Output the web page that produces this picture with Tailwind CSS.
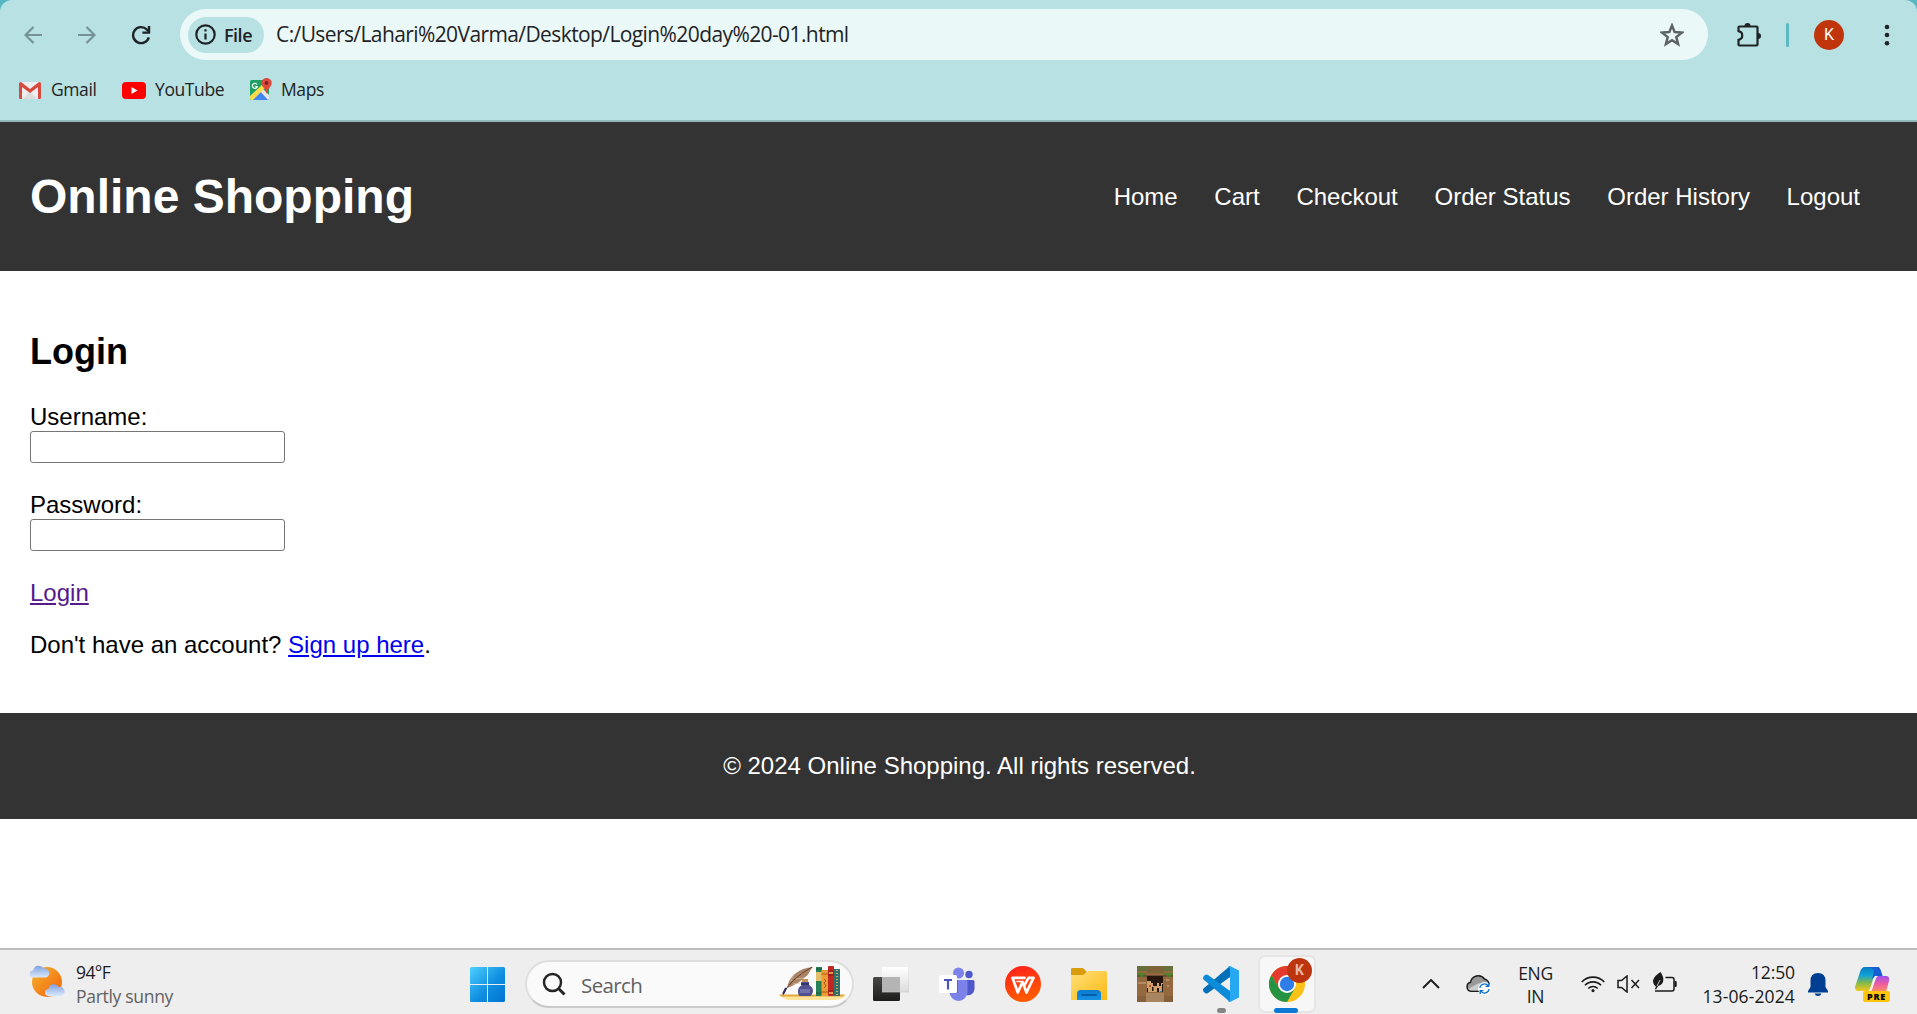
<!DOCTYPE html>
<html lang="en">
<head>
<meta charset="utf-8">
<title>Online Shopping</title>
<script src="https://cdn.jsdelivr.net/npm/@tailwindcss/browser@4"></script>
</head>
<body class="flex h-[1014px] w-[1917px] flex-col overflow-hidden bg-white font-['Open_Sans',sans-serif]">

<!-- Browser toolbar -->
<div class="h-[122px] shrink-0 bg-[#58b8c1]">
<div class="h-[122px] rounded-t-[12px] border-b-2 border-[#92b8ba] bg-[#b8e1e4] pt-[9px] text-[#1f2325]">
  <div class="flex h-[51px] items-center">
    <svg class="ml-[24px] h-[18px] w-[18px]" viewBox="0 0 18 18" fill="none" stroke="#759294" stroke-width="2.2"><path d="M18 9H2M9.500 1L1.500 9l8 8"/></svg>
    <svg class="ml-[36px] h-[18px] w-[18px]" viewBox="0 0 18 18" fill="none" stroke="#759294" stroke-width="2.2"><path d="M0 9h16M8.500 1l8 8-8 8"/></svg>
    <svg class="ml-[35px] h-[20px] w-[20px]" viewBox="0 0 20 20" fill="none" stroke="#1f2325" stroke-width="2.4"><path d="M17.800 12.300A8 8 0 1 1 15.800 4.500L18 6.700"/><path d="M18 1v6.600h-6.600"/></svg>
    <div class="ml-[29px] flex h-[51px] w-[1528px] items-center rounded-full bg-[#ebf8f8] pl-[8px]">
      <div class="flex h-[36px] w-[76px] items-center rounded-full bg-[#b8e1e4] pl-[7px]">
        <svg class="h-[21px] w-[21px]" viewBox="0 0 21 21" fill="none" stroke="#1f2325" stroke-width="2.200"><circle cx="10.500" cy="10.500" r="9.200"/><path d="M10.500 9.500v6M10.500 5.200v2.300"/></svg>
        <span class="ml-[8px] text-[18px] font-semibold leading-6 tracking-[-0.5px]">File</span>
      </div>
      <span class="-mt-[1px] ml-[12px] w-[600px] whitespace-nowrap text-[21px] leading-7 tracking-[-0.6px]">C:/Users/Lahari%20Varma/Desktop/Login%20day%20-01.html</span>
      <svg class="ml-[784px] h-[24px] w-[24px]" viewBox="0 0 24 24" fill="none" stroke="#5d6365" stroke-width="2.500"><path d="M12 2.500l2.700 6.600 7.100.5-5.500 4.500 1.800 7-6.100-3.800-6.100 3.800 1.800-7-5.500-4.500 7.100-.5z"/></svg>
    </div>
    <svg class="ml-[28px] h-[26px] w-[26px]" viewBox="0 0 26 26"><path d="M3.500 4.500h17a1 1 0 0 1 1 1v17a1 1 0 0 1-1 1h-17a1 1 0 0 1-1-1v-4.700c5-1 5-7.600 0-8.600V5.500a1 1 0 0 1 1-1z" fill="none" stroke="#1f2325" stroke-width="2.200"/><path d="M8.500 4a3 3 0 0 1 6 0zM22 11a3 3 0 0 1 0 6z" fill="#1f2325"/></svg>
    <div class="ml-[24px] h-[24px] w-[3px] rounded bg-[#5cb9c2]"></div>
    <div class="ml-[25px] flex h-[30px] w-[30px] items-center justify-center rounded-full bg-[#c1350d] font-['Roboto'] text-[16px] text-white">K</div>
    <svg class="ml-[40px] h-[22px] w-[6px]" viewBox="0 0 6 22" fill="#1f2325"><circle cx="3" cy="3" r="2.300"/><circle cx="3" cy="11" r="2.300"/><circle cx="3" cy="19.300" r="2.300"/></svg>
  </div>
  <div class="flex h-[60px] items-center text-[17.5px] tracking-[-0.4px]">
    <svg class="ml-[19px] h-[17px] w-[22px]" viewBox="0 0 22 17"><path d="M1 0h20v17H1z" fill="#eee"/><path d="M4 17l7-8 7 8z" fill="#ddd"/><path d="M0 1.500Q0 0 2 0l9 7 9-7q2 0 2 1.500V15.500Q22 17 20.500 17H19V5l-8 6-8-6v12H1.500Q0 17 0 15.500z" fill="#d9493c"/></svg>
    <span class="-mt-[1px] ml-[10px] w-[46px]">Gmail</span>
    <svg class="ml-[25px] h-[17px] w-[24px]" viewBox="0 0 24 17"><rect width="24" height="17" rx="4" fill="#f00"/><path d="M9.500 5v7l6-3.500z" fill="#fff"/></svg>
    <span class="-mt-[1px] ml-[9px] w-[70px]">YouTube</span>
    <svg class="-mt-[2px] ml-[25px] h-[22px] w-[22px]" viewBox="0 0 22 22"><rect y="2" width="19" height="20" rx="1.500" fill="#1fa163"/><path d="M2 22l8.500-8.500L19 22z" fill="#4285f4"/><path d="M9 12l3-2 7 7v4l-1 1z" fill="#e8e8e8"/><path d="M0 18L12 7l3 3L3 22H1.500Q0 22 0 20z" fill="#fddc4b"/><path d="M7 6.500a2.500 2.500 0 1 0 .3 2H5" fill="none" stroke="#fff" stroke-width="1.200"/><path d="M16.500 0c3.300 0 5.200 2.400 5.200 5 0 4-4 5-5 11-1-6-5.200-7-5.200-11 0-2.600 1.900-5 5-5z" fill="#dc4b3e"/><circle cx="16.500" cy="5" r="1.900" fill="#7d241e"/></svg>
    <span class="-mt-[1px] ml-[9px]">Maps</span>
  </div>
</div>
</div>

<!-- Page -->
<div class="flex h-[826px] shrink-0 flex-col bg-white font-['Liberation_Sans',Arial,sans-serif] text-[24px] leading-[27px] text-black">
  <header class="flex h-[149px] shrink-0 items-center justify-between bg-[#333] px-[30px] text-white">
    <h1 class="text-[48px] font-bold leading-[54px]">Online Shopping</h1>
    <nav class="mr-[27px] flex gap-[36.700px]">
      <a>Home</a><a>Cart</a><a>Checkout</a><a>Order Status</a><a>Order History</a><a>Logout</a>
    </nav>
  </header>
  <main class="flex h-[442px] shrink-0 flex-col items-start px-[30px] pt-[60px]">
    <h2 class="mb-[31px] text-[36px] font-bold leading-[41px]">Login</h2>
    <label class="h-[28px]">Username:</label>
    <input class="mb-[28px] h-[32px] w-[255px] rounded-[3px] border border-[#767676] bg-white">
    <label class="h-[28px]">Password:</label>
    <input type="password" class="mb-[28px] h-[32px] w-[255px] rounded-[3px] border border-[#767676] bg-white">
    <a class="mb-[25px] text-[#551a8b] underline">Login</a>
    <p>Don't have an account? <a class="text-[#0000ee] underline">Sign up here</a>.</p>
  </main>
  <footer class="flex h-[106px] shrink-0 items-center justify-center bg-[#333] pb-[2px] pl-[2px] text-white">© 2024 Online Shopping. All rights reserved.</footer>
</div>

<!-- Taskbar -->
<div class="flex h-[66px] shrink-0 items-center border-t-2 border-[#bdbdbd] bg-[#eee] pt-[4px] text-[#1b1b1b]">
  <svg class="-mt-[7px] ml-[29px] h-[34px] w-[36px]" viewBox="0 0 36 34">
    <defs><linearGradient id="sun" x2="1" y2="1"><stop stop-color="#f5b52c"/><stop offset="1" stop-color="#f2600c"/></linearGradient><linearGradient id="cl" x2="0" y2="1"><stop stop-color="#7fa0e0"/><stop offset="1" stop-color="#dbe9fb"/></linearGradient></defs>
    <circle cx="18" cy="18" r="15" fill="url(#sun)"/>
    <path id="cloud" d="M3.500 13.500a3.600 3.600 0 0 1 .8-7.100A5.500 5.500 0 0 1 14.500 4.500a4.600 4.600 0 0 1 2.500 9z" fill="url(#cl)"/>
    <use href="#cloud" x="15.200" y="18.500"/>
  </svg>
  <div class="-mt-[1px] ml-[11px] w-[110px] text-[17.5px] leading-[24px] tracking-[-0.3px]"><div class="tracking-[-0.6px]">94°F</div><div class="whitespace-nowrap text-[#616161]">Partly sunny</div></div>

  <svg class="ml-[284px] h-[35px] w-[35px]" viewBox="0 0 35 35">
    <defs><linearGradient id="win" x2="1" y2="1"><stop stop-color="#4fd0ff"/><stop offset=".55" stop-color="#0f8fe0"/><stop offset="1" stop-color="#0273d3"/></linearGradient></defs>
    <path d="M1.500 0H17v17H0V1.500Q0 0 1.500 0zM18 0h15.500Q35 0 35 1.500V17H18zM0 18h17v17H1.500Q0 35 0 33.500zM18 18h17v15.500q0 1.500-1.500 1.500H18z" fill="url(#win)"/>
  </svg>

  <div class="ml-[20px] flex h-[48px] w-[329px] items-center rounded-full border-2 border-[#dedede] border-b-[#c9c9c9] bg-[#fafafa] pl-[15px]">
    <svg class="h-[24px] w-[24px]" viewBox="0 0 24 24" fill="none" stroke="#252525" stroke-width="2.500"><circle cx="10.500" cy="10.500" r="8.500"/><path d="M16.500 16.500l6 6" stroke-width="3"/></svg>
    <span class="ml-[15px] mt-[2px] w-[198px] text-[20.5px] leading-6 tracking-[-0.6px] text-[#616161]">Search</span>
    <svg class="h-[36px] w-[67px]" viewBox="0 0 67 36">
      <path d="M0 29h67q-3 4-10 5H9q-5-1-9-5z" fill="#ffe39a"/><path d="M0 28.500h66l-2 2H2z" fill="#dfa83c"/>
      <path d="M8 22C10 10 20 2 34 1c-4 4-3 7-9 11-4 4-11 8-17 10z" fill="#a98363"/><path d="M4 29Q10 14 33 1" fill="none" stroke="#5d4334" stroke-width="1"/><path d="M4 28l3-6" stroke="#312e68" stroke-width="2"/><path d="M14 18l7-1M17 13l8-1M12 15l3-7" stroke="#dac2a3" stroke-width=".7"/>
      <path d="M23 13h6v4h-6z" fill="#c69255"/><path d="M22 16h8v3q4 2 4 6-1 5-3 5H21q-2 0-2-5 0-4 4-6z" fill="#51518f"/><path d="M21 23h10v4H21z" fill="#7171ad"/><path d="M22 17h8v2h-8z" fill="#33356f"/>
      <rect x="37" y="1" width="6" height="29" fill="#278055"/><path d="M37 6h6v9h-6z" fill="#e0c16a"/><path d="M37 3h6M37 27h6" stroke="#14583a" stroke-width="1.200"/>
      <rect x="42.500" y="4" width="7" height="26" fill="#ed9b35"/><path d="M42.500 8h7M42.500 26h7M45 13l2 2-2 2 2 3-2 2" fill="none" stroke="#9b4b18" stroke-width=".8"/>
      <rect x="49" y="0" width="6" height="30" rx="1" fill="#c32722"/><path d="M49 5h6M49 9h6M49 25h6" stroke="#6f1612" stroke-width=".8"/><path d="M50 7h4M50 27h4" stroke="#f4bb58" stroke-width="1.400"/>
      <rect x="55" y="3" width="6" height="27" fill="#337069"/><path d="M58 4v25" stroke="#c9b06b" stroke-width="2" stroke-dasharray="1 2"/>
    </svg>
  </div>

  <!-- Pinned applications -->
  <div class="ml-[4px] flex h-[60px] items-center">
    <div class="flex w-[66px] justify-center"><svg class="h-[36px] w-[36px]" viewBox="0 0 36 36"><defs><linearGradient id="tv" x2="0" y2="1"><stop stop-color="#474745"/><stop offset="1" stop-color="#1c1c1b"/></linearGradient><linearGradient id="tw" x2="0" y2="1"><stop stop-color="#fff"/><stop offset="1" stop-color="#dcdcdc"/></linearGradient></defs><rect y="11" width="27" height="24" rx="1.500" fill="url(#tv)"/><path d="M9 1h27v25H9z" fill="url(#tw)"/><path d="M9 11h18v15H9z" fill="#b4b4b4"/><path d="M9 26h27V1" fill="none" stroke="#c8c8c8" stroke-width=".7"/></svg></div>
    <div class="flex w-[66px] justify-center"><svg class="h-[36px] w-[36px]" viewBox="0 0 36 36"><circle cx="19.500" cy="7" r="5.500" fill="#7b83eb"/><circle cx="30" cy="8.500" r="3.700" fill="#5059c9"/><path d="M25 14h9q1.500 0 1.500 1.500V23a6.500 6.500 0 0 1-8 6z" fill="#5059c9"/><path d="M10 14h17q1.500 0 1.500 1.500V26a9 9 0 0 1-18 0z" fill="#7b83eb"/><path d="M11 27h8V14h-8z" fill="#5c63c7"/><rect y="9" width="18" height="18" rx="1.500" fill="#fff"/><path d="M5 14h8M9 14v9.500" stroke="#4b53bc" stroke-width="2.200"/></svg></div>
    <div class="flex w-[66px] justify-center"><svg class="h-[36px] w-[36px]" viewBox="0 0 36 36"><defs><linearGradient id="wps" x2=".3" y2="1"><stop stop-color="#ff1e1e"/><stop offset="1" stop-color="#ff5a00"/></linearGradient></defs><circle cx="18" cy="18" r="18" fill="url(#wps)"/><path d="M19.500 11.800H7.500l5.300 14.700L17.500 16l4 10.500 7-14.700h-5l-4.500 8" fill="none" stroke="#fff" stroke-width="2.700" stroke-linejoin="round" stroke-linecap="round"/><path d="M11.500 15.500h5" stroke="#fff" stroke-width="1.500"/></svg></div>
    <div class="flex w-[66px] justify-center"><svg class="h-[36px] w-[36px]" viewBox="0 0 36 36"><defs><linearGradient id="fo" x2="1" y2="1"><stop stop-color="#ffe07a"/><stop offset="1" stop-color="#fcb912"/></linearGradient><linearGradient id="fb" x2="0" y2="1"><stop stop-color="#0a7bd0"/><stop offset="1" stop-color="#1592e6"/></linearGradient></defs><path d="M0 3q0-1 1.500-1H11q1 0 2 1l3 3-3 5H0z" fill="#d99c0c"/><path d="M0 9h11q1.500 0 2.500-1l2-2q1-1 2-1H34.500Q36 5 36 6.500V34H0z" fill="url(#fo)"/><path d="M6 34v-6q0-4 4-4h16q4 0 4 4v6z" fill="url(#fb)"/><path d="M11 29h14" stroke="#064f92" stroke-width="1.600" stroke-linecap="round"/></svg></div>
    <div class="flex w-[66px] justify-center"><svg class="h-[36px] w-[36px]" viewBox="0 0 36 36"><path fill="#94693f" d="M0 0h36v36H0z"/><path fill="#65703a" d="M0 0h36v5H0z"/><path fill="#7d6338" d="M10 0h17v7H10z"/><path fill="#70502f" d="M0 9h36v2H0z"/><path d="M0 8h9M27 8h9M3 10h3M30 10h4" stroke="#3d8b2d" stroke-width="1.500"/><path fill="#b58d62" d="M1 16h8v2H1zM29 13h3v2h-3zM30 19h2v2h-2z"/><path fill="#d0a06b" d="M10 14h16v12H10z"/><path fill="#281711" d="M10 10h16v7h-2v3h-2v-3h-2v3h-4v-3h-2v-2h-4zM10 22h1v4h-1zM15 21h1.500v4H15zM20 22h2v4h-2zM25 18h1v8h-1z"/><path fill="#c84936" d="M12 19h2v2h-2z"/><path fill="#3983bd" d="M23 25h2v1h-2z"/><path fill="#a98460" d="M9 27h18v9H9z"/><path fill="#86603a" d="M0 30h9v6H0zM27 30h9v6h-9z"/></svg></div>
    <div class="relative flex w-[66px] justify-center"><svg class="h-[36px] w-[36px]" viewBox="0 0 36 36"><path d="M27 0v11L5 27q-1.500 1-3 0l-1.500-1.500q-1-1.500 0-3z" fill="#0070b8"/><path d="M27 36V25L5 9Q3.500 8 2 9L.5 10.500q-1 1.500 0 3z" fill="#0c8bd8"/><path d="M27 0l9 4.500v27L27 36q-1.500 0-2-1 2 .5 2-1.500v-31Q27 .5 25 1q.5-1 2-1z" fill="#27a9f2"/></svg><div class="absolute top-[42px] h-[5px] w-[9px] rounded-full bg-[#858585]"></div></div>
    <div class="relative flex w-[66px] justify-center">
      <div class="relative flex h-[58px] w-[58px] items-center justify-center rounded-[7px] border-2 border-[#e5e5e5] bg-[#f7f7f7]">
        <svg class="h-[36px] w-[36px]" viewBox="0 0 36 36"><circle cx="18" cy="18" r="18" fill="#fbc116"/><path d="M18 9h15.600A18 18 0 0 0 2.400 9l7.800 13.500z" fill="#e33b2e"/><path d="M2.400 9A18 18 0 0 0 18 36l7.800-13.500L10.200 22.500z" fill="#269343"/><circle cx="18" cy="18" r="9" fill="#fff"/><circle cx="18" cy="18" r="7.200" fill="#2f7de9"/></svg>
        <div class="absolute left-[27px] top-[1px] flex h-[25px] w-[25px] items-center justify-center rounded-full bg-[#bd350f] font-['Roboto'] text-[14px] font-bold text-[#e8b5a5]">K</div>
        <div class="absolute bottom-[-2px] left-[14px] h-[5px] w-[24px] rounded-full bg-[#0d79d4]"></div>
      </div>
    </div>
  </div>

  <!-- System tray -->
  <svg class="ml-[102px] h-[10px] w-[18px]" viewBox="0 0 18 10" fill="none" stroke="#1b1b1b" stroke-width="1.900"><path d="M1 9l8-8 8 8"/></svg>
  <svg class="ml-[26px] h-[21px] w-[25px]" viewBox="0 0 25 21"><path d="M5 17.300a4.600 4.600 0 0 1-.5-9A7.800 7.800 0 0 1 18.500 5a6 6 0 0 1 4.500 6.500q0 5.800-5 5.800z" fill="#999" stroke="#1b1b1b" stroke-width="1.500"/><path d="M2 15l11-6 5 3-4 4.500H5z" fill="#ccc"/><circle cx="18.500" cy="14.500" r="6.500" fill="#fff"/><path d="M13.800 13.800a4.800 4.800 0 0 1 8.500-2M23.200 15.200a4.800 4.800 0 0 1-8.500 2M22.800 9v3.300h-3.300M14.200 20v-3.300h3.300" fill="none" stroke="#0d6fc7" stroke-width="1.300"/></svg>
  <div class="ml-[23px] mt-[1px] w-[43px] text-center text-[17.5px] leading-[23px] tracking-[-0.3px]">ENG<br>IN</div>
  <svg class="ml-[24px] h-[18px] w-[24px]" viewBox="0 0 24 18" fill="none" stroke="#1b1b1b" stroke-width="1.600"><path d="M.7 7a15.500 15.500 0 0 1 22.600 0M4 10.300a11 11 0 0 1 16 0M7.300 13.500a6.500 6.500 0 0 1 9.400 0"/><circle cx="12" cy="15.600" r="1.600" fill="#1b1b1b" stroke="none"/></svg>
  <svg class="ml-[12px] h-[18px] w-[23px]" viewBox="0 0 23 18" fill="none" stroke="#1b1b1b" stroke-width="1.500"><path d="M1 5.500h3.500L10 1v16l-5.500-4.500H1zM14.500 5l7.500 8M22 5l-7.500 8"/></svg>
  <svg class="-mt-[3px] ml-[13px] h-[21px] w-[24px]" viewBox="0 0 24 21"><path d="M12.500 5.500H19q2 0 2 2V17q0 2-2 2H2" fill="none" stroke="#1b1b1b" stroke-width="1.500"/><path d="M21.500 9h1.200q1 0 1 1v4q0 1-1 1h-1.200z" fill="#1b1b1b"/><path d="M7.500 0q3.500 5 2.700 9-.7 4-5.200 5l-2 3.500-1-.5 1-2.500Q0 12.500 0 8.500q.5-4 7.500-8.500z" fill="#1b1b1b"/><path d="M4 14l3-6" stroke="#eee" stroke-width=".8"/></svg>
  <div class="-mt-[1px] ml-[16px] w-[102px] whitespace-nowrap text-right text-[17.5px] leading-[24px] tracking-[0.12px]"><div class="tracking-[-0.1px]">12:50</div>13-06-2024</div>
  <svg class="ml-[13px] h-[23px] w-[20px]" viewBox="0 0 20 23" fill="#003e92"><path d="M10 0q7.500 0 7.500 8v6L20 18v1.500H0V18l2.500-4V8Q2.500 0 10 0zM6.500 20.500h7Q12.500 23 10 23t-3.500-2.500z"/></svg>
  <div class="relative ml-[27px] h-[35px] w-[35px]">
    <svg class="h-[35px] w-[35px]" viewBox="0 0 35 35"><defs><linearGradient id="c1" x2="0" y2="1"><stop stop-color="#0779c5"/><stop offset=".35" stop-color="#11a3d8"/><stop offset=".65" stop-color="#7fb94c"/><stop offset="1" stop-color="#f7c51b"/></linearGradient><linearGradient id="c2" x2="0" y2="1"><stop stop-color="#a04ef0"/><stop offset=".5" stop-color="#ee5ca0"/><stop offset="1" stop-color="#fc9061"/></linearGradient></defs><path d="M10 0h13q2 0 1 3l-6 18q-1 3-4 3H3q-3 0-3-4L5 5Q6.500 0 10 0z" fill="url(#c1)"/><path d="M10 0h12q3 0 4 4l2 6h-7q-3 0-4 3l2-9q-1-4-9-4z" fill="#185dd2"/><path d="M22 9h9q4 0 3 5l-3 11H14q2-1 3-4l3-10z" fill="url(#c2)"/><path d="M20 9h3q-2 1-3 5l-3 9q-1 2-3 2h-2q3-2 4-6l2-7q1-2 2-3z" fill="#f5f1ef"/></svg>
    <div class="absolute left-[8px] top-[24px] flex h-[11px] w-[27px] items-center justify-center rounded-[2px] bg-[#ffc40c] text-[9px] font-extrabold leading-none tracking-[0.7px] text-black">PRE</div>
  </div>
</div>
</body>
</html>
